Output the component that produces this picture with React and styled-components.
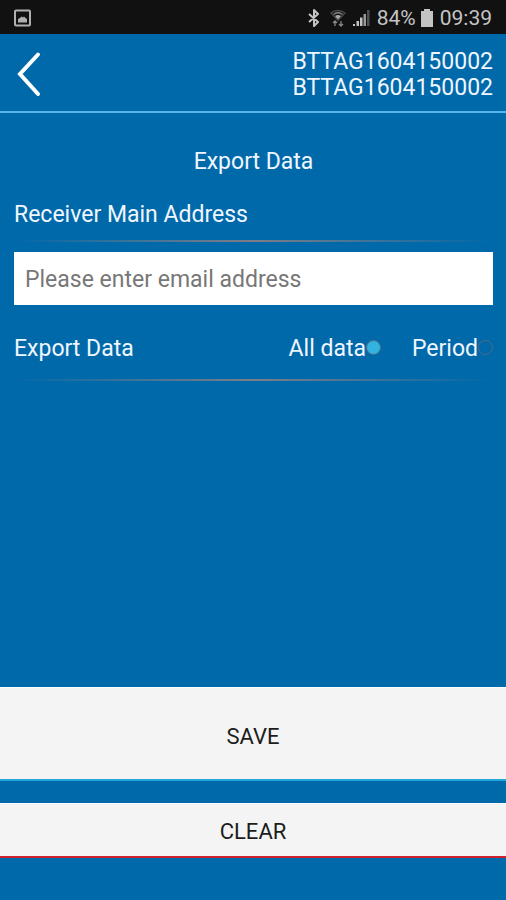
import React, { useState } from 'react';
import styled, { createGlobalStyle } from 'styled-components';

const GlobalStyle = createGlobalStyle`
  *,
  *::before,
  *::after {
    box-sizing: border-box;
  }

  body {
    margin: 0;
    background: #0069aa;
    font-family: Roboto, "Liberation Sans", sans-serif;
    font-size: 23px;
    line-height: 26px;
    color: #f0f6ff;
  }

  button,
  input {
    font: inherit;
  }
`;

const Screen = styled.div`
  display: flex;
  flex-direction: column;
  min-height: 100vh;
`;

const StatusBar = styled.div`
  display: flex;
  align-items: center;
  justify-content: space-between;
  height: 34px;
  padding: 2px 14px 0;
  background: #111;
  color: #c4c4c4;
  font-size: 21px;
`;

const StatusGroup = styled.div`
  display: flex;
  align-items: center;

  svg {
    display: block;
  }
`;

const StatusText = styled.span`
  margin-left: 7px;
`;

const StatusIcons = styled.div`
  display: flex;
  gap: 6px;

  svg:first-child {
    margin-right: 4px;
  }
`;

const Battery = styled.div`
  margin-left: 5px;
`;

const Header = styled.header`
  display: flex;
  align-items: center;
  justify-content: space-between;
  padding: 15px 13px 10px 14px;
  border-bottom: 2px solid #55b4ea;
`;

const BackButton = styled.button`
  display: flex;
  padding: 0 0 2px;
  border: 0;
  background: none;
  color: #fff;
  cursor: pointer;
`;

const DeviceInfo = styled.div`
  text-align: right;
`;

const Main = styled.main`
  flex: 1;
  padding: 36px 13px 24px 14px;
`;

const Title = styled.h1`
  margin: 0 0 27px;
  font-size: 23px;
  font-weight: 400;
  text-align: center;
`;

const FieldLabel = styled.label`
  display: block;
`;

const Divider = styled.hr`
  height: 2px;
  margin: ${({ $space }) => $space} 0 0;
  border: 0;
  background: linear-gradient(
    to right,
    rgba(125, 125, 135, 0),
    rgba(125, 125, 135, 1) 50%,
    rgba(125, 125, 135, 0)
  );
`;

const EmailInput = styled.input`
  display: block;
  width: 100%;
  height: 53px;
  margin: 10px 0 31px;
  padding: 2px 11px 0;
  border: 0;
  border-radius: 0;
  background: #fff;
  color: #222;

  &::placeholder {
    color: #777;
    opacity: 1;
  }
`;

const OptionRow = styled.fieldset`
  display: flex;
  justify-content: space-between;
  min-width: 0;
  margin: 0;
  padding: 0;
  border: 0;
`;

const Options = styled.div`
  display: flex;
  gap: 31px;
`;

const RadioLabel = styled.label`
  display: flex;
  align-items: center;
  cursor: pointer;
`;

const Radio = styled.input`
  appearance: none;
  width: 15px;
  height: 15px;
  margin: 0 0 4px;
  border: 1px solid #506a85;
  border-radius: 50%;

  &:checked {
    background: #30b3e0;
  }
`;

const Actions = styled.footer`
  display: flex;
  flex-direction: column;
  gap: 22px;
  padding-bottom: 42px;
`;

const ActionButton = styled.button`
  width: 100%;
  padding: ${({ $padding }) => $padding};
  border: 0;
  border-top: 1px solid #fff;
  border-bottom: 2px solid ${({ $accent }) => $accent};
  border-radius: 0;
  background: #f4f4f4;
  color: #1c1c1c;
  font-size: 22px;
  cursor: pointer;
`;

const PictureIcon = () => (
  <svg width="17" height="18" viewBox="0 0 17 18" aria-hidden="true">
    <rect x="1" y="1.5" width="15" height="15" rx="1" fill="none" stroke="#b0b0b0" strokeWidth="2" />
    <path d="M4 13.500V10l2-1 1.500-1.500L9 8.500l1-1L11.500 9l1.500 1v3.500z" fill="#b0b0b0" />
  </svg>
);

const BluetoothIcon = () => (
  <svg width="12" height="18" viewBox="0 0 12 18" aria-hidden="true">
    <path
      d="M1 5l9 8-4 4V1l4 4-9 8"
      fill="none"
      stroke="#c4c4c4"
      strokeWidth="2"
      strokeLinejoin="round"
    />
  </svg>
);

const WifiIcon = () => (
  <svg width="16" height="18" viewBox="0 0 16 18" aria-hidden="true">
    <g fill="none" strokeWidth="1.5">
      <path d="M1 4C5 .5 11 .5 15 4L8 11.500z" stroke="#484848" />
      <path d="M3.500 5.500c3-2.500 6-2.500 9 0" stroke="#777" />
    </g>
    <path d="M5 7c2-1.500 4-1.500 6 0l-3 3.500z" fill="#aaa" />
    <path d="M5 17v-5M3 14l2-2 2 2M11 12v5M9 15l2 2 2-2" fill="none" stroke="#888" strokeWidth="1.3" />
  </svg>
);

const SignalIcon = () => (
  <svg width="18" height="18" viewBox="0 0 18 18" aria-hidden="true">
    <path d="M1 15h2v2H1zM4.500 12h2.500v5H4.500zM8 8.500h2.500V17H8z" fill="#c4c4c4" />
    <path d="M11.500 5H14v12h-2.500z" fill="#999" />
    <path d="M15 1h2.500v16H15z" fill="#505050" />
  </svg>
);

const BatteryIcon = () => (
  <svg width="12" height="18" viewBox="0 0 12 18" aria-hidden="true">
    <path d="M3 0h6v2h3v16H0V2h3z" fill="#c4c4c4" />
  </svg>
);

const BackIcon = () => (
  <svg width="28" height="46" viewBox="0 0 28 46" aria-hidden="true">
    <path
      d="M24 3.500L6 23l18 20"
      fill="none"
      stroke="currentColor"
      strokeWidth="4"
      strokeLinecap="round"
      strokeLinejoin="miter"
    />
  </svg>
);

const App = () => {
  const [email, setEmail] = useState('');
  const [range, setRange] = useState('all');

  const handleClear = () => {
    setEmail('');
    setRange('all');
  };

  return (
    <>
      <GlobalStyle />
      <Screen>
        <StatusBar>
          <PictureIcon />
          <StatusGroup>
            <StatusIcons>
              <BluetoothIcon />
              <WifiIcon />
              <SignalIcon />
            </StatusIcons>
            <StatusText>84%</StatusText>
            <Battery>
              <BatteryIcon />
            </Battery>
            <StatusText>09:39</StatusText>
          </StatusGroup>
        </StatusBar>

        <Header>
          <BackButton type="button" aria-label="Back">
            <BackIcon />
          </BackButton>
          <DeviceInfo>
            <div>BTTAG1604150002</div>
            <div>BTTAG1604150002</div>
          </DeviceInfo>
        </Header>

        <Main>
          <Title>Export Data</Title>
          <FieldLabel htmlFor="email">Receiver Main Address</FieldLabel>
          <Divider $space="12px" />
          <EmailInput
            id="email"
            type="email"
            placeholder="Please enter email address"
            value={email}
            onChange={(e) => setEmail(e.target.value)}
          />
          <OptionRow role="radiogroup" aria-labelledby="range-label">
            <span id="range-label">Export Data</span>
            <Options>
              <RadioLabel>
                All data
                <Radio
                  type="radio"
                  name="range"
                  checked={range === 'all'}
                  onChange={() => setRange('all')}
                />
              </RadioLabel>
              <RadioLabel>
                Period
                <Radio
                  type="radio"
                  name="range"
                  checked={range === 'period'}
                  onChange={() => setRange('period')}
                />
              </RadioLabel>
            </Options>
          </OptionRow>
          <Divider $space="17px" />
        </Main>

        <Actions>
          <ActionButton type="button" $padding="36px 0 29px" $accent="#22a7d8">
            SAVE
          </ActionButton>
          <ActionButton type="button" $padding="15px 0 11px" $accent="#cf2030" onClick={handleClear}>
            CLEAR
          </ActionButton>
        </Actions>
      </Screen>
    </>
  );
};

export default App;
